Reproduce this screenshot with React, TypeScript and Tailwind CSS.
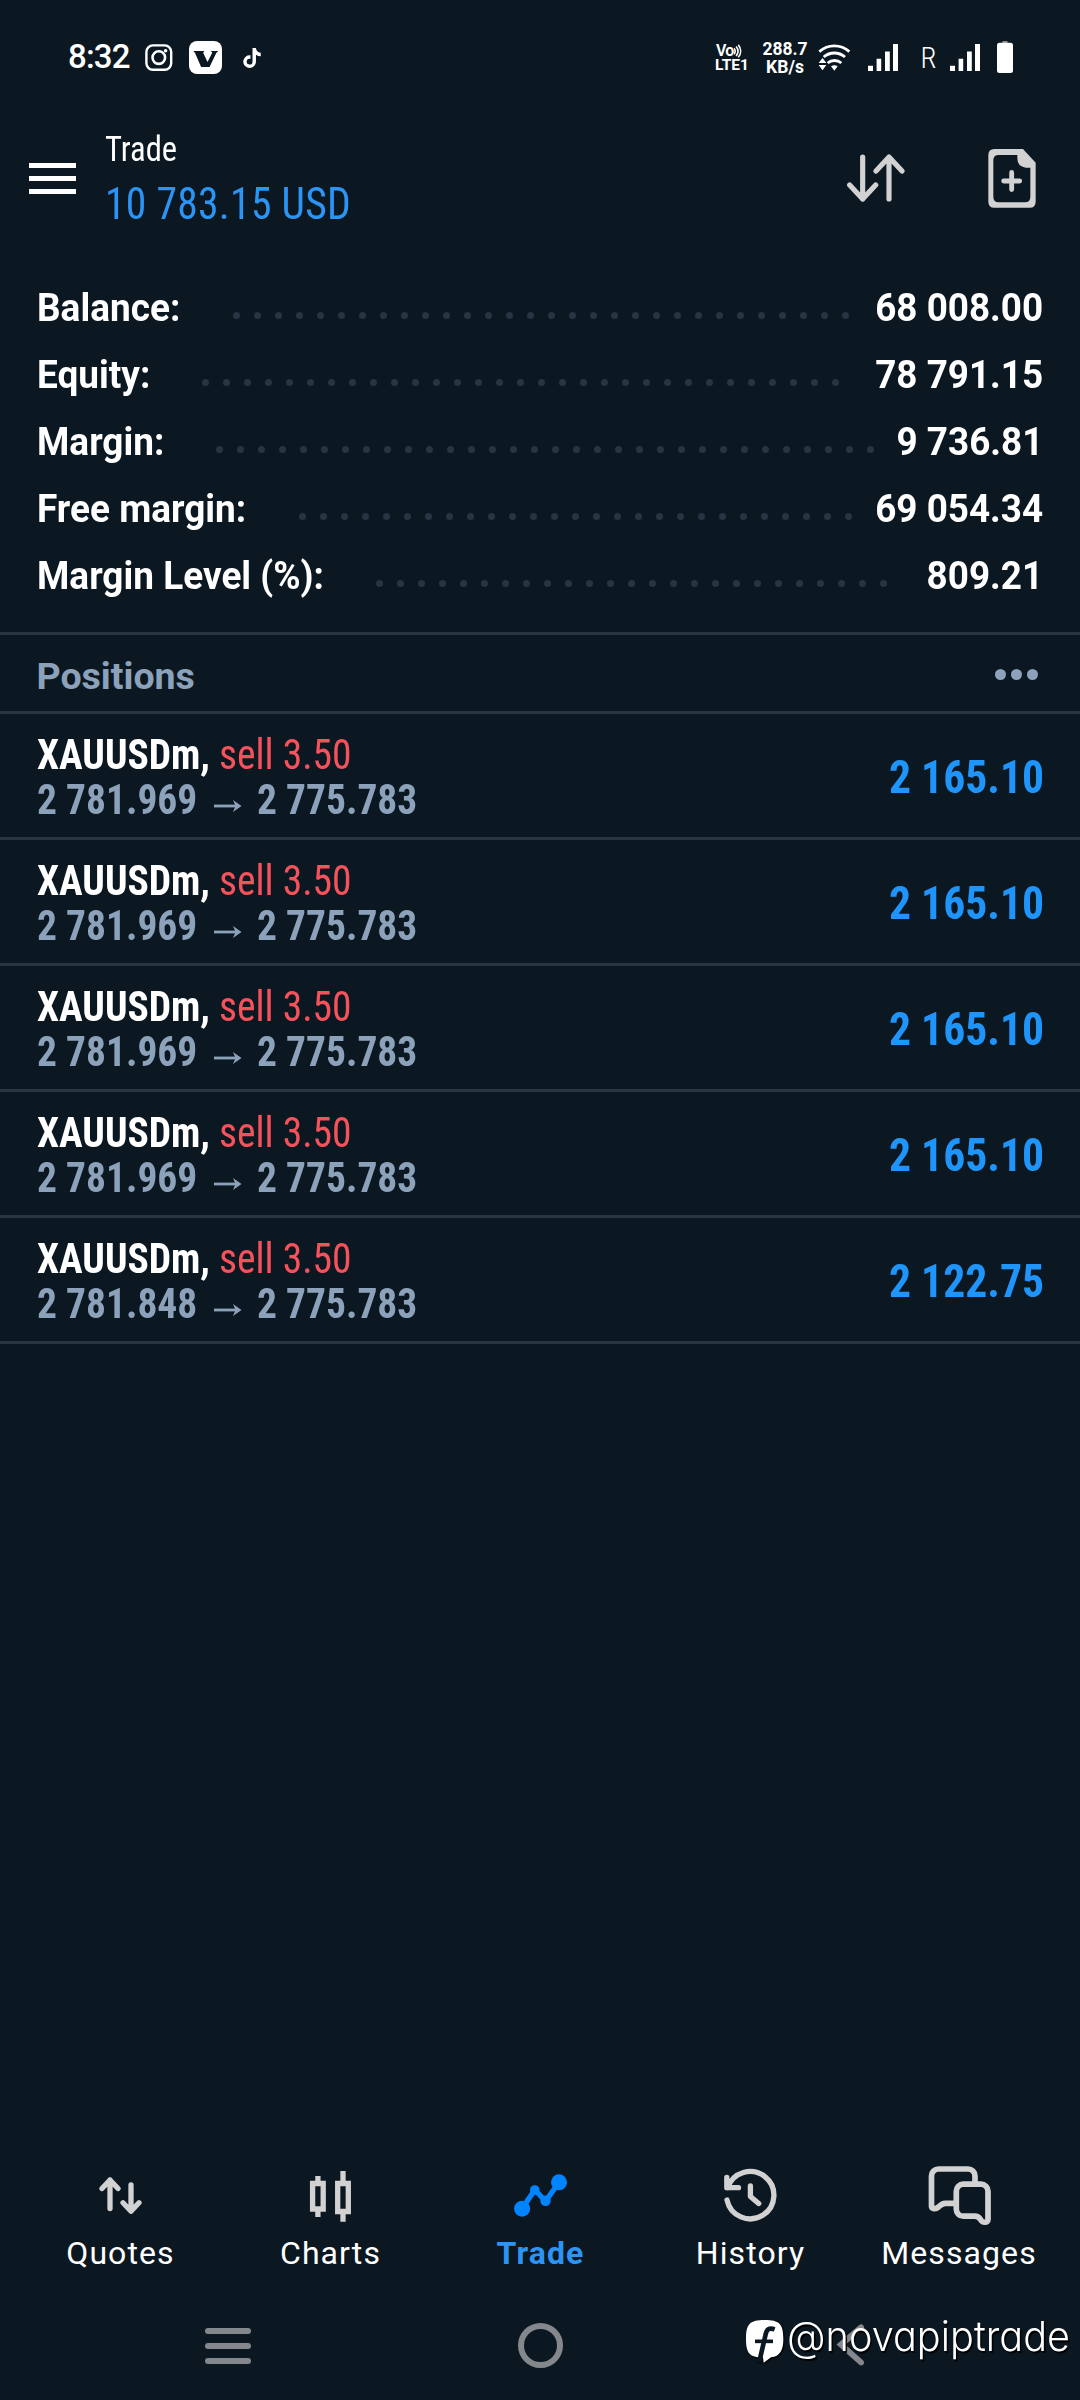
import type { ReactNode } from 'react';
import { FaTiktok } from 'react-icons/fa6';

const summary = [
  { label: 'Balance:', value: '68 008.00', dots: 30, end: 'mr-[21.200px]' },
  { label: 'Equity:', value: '78 791.15', dots: 31, end: 'mr-[31.500px]' },
  { label: 'Margin:', value: '9 736.81', dots: 32, end: 'mr-[18.200px]' },
  { label: 'Free margin:', value: '69 054.34', dots: 27, end: 'mr-[18.100px]' },
  { label: 'Margin Level (%):', value: '809.21', dots: 25, end: 'mr-[36.300px]' },
];

const positions = [
  { open: '2 781.969', profit: '2 165.10' },
  { open: '2 781.969', profit: '2 165.10' },
  { open: '2 781.969', profit: '2 165.10' },
  { open: '2 781.969', profit: '2 165.10' },
  { open: '2 781.848', profit: '2 122.75' },
];

function Signal() {
  return (
    <svg className="h-[27px] w-[30px]" viewBox="0 0 30 27" fill="#fff">
      <path d="M0 21.7h5V27H0zM8.6 14.7h4.6V27H8.6zM17 7.5h4.8V27H17zM25 0h5v27h-5z" />
    </svg>
  );
}

function StatusBar() {
  return (
    <div className="flex h-[114px] items-start text-white">
      <span className="ml-[68px] mt-[41px] w-[77px] text-[33px] leading-[32px] font-medium tracking-[-0.8px]">8:32</span>
      <svg className="mt-[44px] h-[28px] w-[28px]" viewBox="0 0 28 28" fill="none" stroke="#fff">
        <rect x="1.4" y="1.4" width="24.8" height="24.4" rx="6.5" strokeWidth="2.4" />
        <circle cx="13.8" cy="13.6" r="6.3" strokeWidth="2.6" />
        <circle cx="20.6" cy="6.7" r="1.8" fill="#fff" stroke="none" />
      </svg>
      <svg className="ml-[16px] mt-[41px] h-[33px] w-[33px]" viewBox="567 63 98 98">
        <rect x="567" y="63" width="98" height="98" rx="24" fill="#fff" />
        <path d="M580 93h33l-4 5 13 27 14-27-4-5h22l-6 6-20 41h-25l-18-41z" fill="#0c1821" />
      </svg>
      <FaTiktok className="ml-[21px] mt-[48px] h-[20px] w-[18px]" />
      <div className="ml-[455px] mt-[43px] h-[30px] w-[36px]">
        <div className="flex h-[15px] items-center">
          <span className="text-[16px] leading-[15px] font-semibold tracking-[-0.8px]">Vo</span>
          <svg className="h-[14px] w-[8px]" viewBox="0 0 9 15" fill="none" stroke="#fff" strokeWidth="1.8">
            <path d="M0 4.5c1.6 2 1.6 4.6 0 6.6M2.4 2.4c2.6 3.2 2.6 7.4 0 10.6M4.8.6c3.6 4.2 3.6 9.8 0 14" />
          </svg>
        </div>
        <div className="-ml-px text-[15.5px] leading-[14px] font-bold">LTE1</div>
      </div>
      <div className="ml-[8px] mt-[40px] w-[50px] text-center text-[17.5px] leading-[18px] font-bold">
        288.7
        <br />
        KB/s
      </div>
      <svg className="ml-[8px] mt-[43px] h-[28px] w-[34px]" viewBox="386 68 102 84">
        <g fill="none" stroke="#fff" strokeWidth="8.5">
          <path d="M390 94c26-23 64-23 90 0" />
          <path d="M403 110c19-16 45-16 64 0" />
          <path d="M415 128c12-10 29-10 41 0" />
        </g>
        <path d="M425 138q10-7 20 0l-10 13zM388 128l11.500-15 11.500 15zM388 134l11.500 16 11.500-16z" fill="#fff" />
      </svg>
      <div className="ml-[16px] mt-[43.500px]">
        <Signal />
      </div>
      <span className="ml-[22.500px] mt-[42px] w-[32px] text-[29px] leading-[32px] font-[350] font-stretch-[85%]">R</span>
      <div className="-ml-[3px] mt-[43.500px]">
        <Signal />
      </div>
      <svg className="ml-[17px] mt-[41px] h-[32px] w-[16px]" viewBox="0 0 16 32">
        <rect x="5.500" y="0" width="5" height="3" fill="#8a8f94" />
        <rect x="0" y="1.800" width="16" height="30.200" rx="2.500" fill="#fff" />
      </svg>
    </div>
  );
}

function Header() {
  return (
    <header className="flex h-[160px] items-start">
      <div className="ml-[29px] mt-[48.500px] flex w-[47px] flex-col gap-[8px]">
        <div className="h-[5.300px] bg-white" />
        <div className="h-[5.300px] bg-white" />
        <div className="h-[5.300px] bg-white" />
      </div>
      <div className="ml-[29px] mt-[10px] flex-1 origin-left scale-x-[0.945] font-stretch-[75%]">
        <div className="text-[34.5px] leading-[50px] text-white">Trade</div>
        <div className="text-[44px] leading-[60px] tracking-[0.300px] text-[#2b94f4]">10 783.15 USD</div>
      </div>
      <svg
        className="mt-[40px] h-[48px] w-[58px] shrink-0"
        viewBox="470 403 174 144"
        fill="none"
        stroke="#d2d2d3"
        strokeWidth="15.500"
        strokeLinecap="round"
        strokeLinejoin="round"
      >
        <path d="M517 412v126M478 496l39 42 39-42M596 538V412M557 454l39-42 39 42" />
      </svg>
      <svg className="ml-[83px] mr-[44px] mt-[35px] h-[59px] w-[48px] shrink-0" viewBox="893 387 144 177">
        <path
          d="M912 387h86l38 41v117q0 18-18 18H912q-18 0-18-18V405q0-18 18-18zM925 405q-16 0-16 16v110q0 16 16 16h79q16 0 16-16v-88h-14q-25-3-25-28v-10z"
          fill="#d2d2d3"
          fillRule="evenodd"
        />
        <path d="M964 457.500v51M940 483h48" stroke="#d2d2d3" strokeWidth="14.500" strokeLinecap="round" />
      </svg>
    </header>
  );
}

function Summary() {
  return (
    <section className="h-[361px] border-b-[3px] border-[#2a3542] pl-[36.500px] pr-[36.500px] text-white">
      {summary.map((row) => (
        <div key={row.label} className="flex h-[67px] items-center text-[38px] leading-[68px] font-bold">
          <span className="origin-left scale-x-[0.973]">{row.label}</span>
          <div className={`ml-auto flex translate-y-[8px] gap-[14px] ${row.end}`}>
            {Array.from({ length: row.dots }, (_, i) => (
              <i key={i} className="h-[7px] w-[7px] rounded-full bg-[#273442]" />
            ))}
          </div>
          <span className="shrink-0 origin-right scale-x-[0.970]">{row.value}</span>
        </div>
      ))}
    </section>
  );
}

function Positions() {
  return (
    <section>
      <div className="flex h-[79px] items-center justify-between border-b-[3px] border-[#2a3542] pl-[36.500px] pr-[42px] text-[#8ca2ba]">
        <h2 className="mt-[6px] text-[37.5px] leading-[40px] font-bold">Positions</h2>
        <div className="mt-[2px] flex gap-[5px]">
          <i className="h-[11px] w-[11px] rounded-full bg-[#8ca2ba]" />
          <i className="h-[11px] w-[11px] rounded-full bg-[#8ca2ba]" />
          <i className="h-[11px] w-[11px] rounded-full bg-[#8ca2ba]" />
        </div>
      </div>
      {positions.map((p, i) => (
        <div
          key={i}
          className="flex h-[126px] items-center justify-between border-b-[3px] border-[#2a3542] pl-[37px] pr-[36px] font-stretch-[75%]"
        >
          <div className="mt-[2px] text-[42px] leading-[45px]">
            <div className="origin-left scale-x-[0.940]">
              <span className="font-bold text-white">XAUUSDm,</span> <span className="text-[#f5525c]">sell 3.50</span>
            </div>
            <div className="flex font-bold text-[#8ca2ba]">
              <span className="w-[177px] origin-left scale-x-[0.940]">{p.open}</span>
              <svg className="mt-[23px] h-[12px] w-[28px]" viewBox="0 0 28 12" fill="none" stroke="#8ca2ba" strokeWidth="2.800">
                <path d="M0 6h24" />
                <path d="M19 0l8.500 6-8.500 6 2.500-6z" fill="#8ca2ba" stroke="none" />
              </svg>
              <span className="ml-[15px] origin-left scale-x-[0.940]">2 775.783</span>
            </div>
          </div>
          <span className="mt-[2px] origin-right scale-x-[0.928] text-[47px] leading-[60px] font-bold text-[#1f95fb]">{p.profit}</span>
        </div>
      ))}
    </section>
  );
}

function Tab({ label, box, active, children }: { label: string; box: string; active?: boolean; children: ReactNode }) {
  return (
    <div className="flex w-[210px] flex-col items-center">
      <svg
        className="h-[70px] w-[80px]"
        viewBox={box}
        fill="none"
        stroke="#d2d2d3"
        strokeWidth="5.300"
        strokeLinecap="round"
        strokeLinejoin="round"
      >
        {children}
      </svg>
      <span
        className={`mt-[7px] text-[32px] leading-[32px] tracking-[1.100px] ${label === 'Messages' ? 'mr-[2px]' : 'ml-[1px]'} ${active ? 'font-bold text-[#2b94f4]' : 'text-white'}`}
      >
        {label}
      </span>
    </div>
  );
}

function TabBar() {
  return (
    <nav className="flex h-[140px] px-[15px]">
      <Tab label="Quotes" box="80 20 80 70">
        <path d="M110 40v28.500M102 48.500l8-8.500 8 8.500M131 45v26M123 62.800l8 8.500 8-8.500" />
      </Tab>
      <Tab label="Charts" box="290 20 80 70">
        <g strokeLinecap="butt" strokeLinejoin="miter">
          <path d="M312.600 43.500h10.600v25.500h-10.600zM317.900 36v6M317.900 70.500V77" />
          <path d="M337.700 43.500h10.600v28h-10.600zM343 31v11M343 72v9.700" />
        </g>
      </Tab>
      <Tab label="Trade" box="500 20 80 70" active>
        <g stroke="#0084ff" fill="#0084ff">
          <path d="M522 68.700l12.800-19 10.700 11.500L559 42.300" fill="none" />
          <circle cx="522.100" cy="68.700" r="8" stroke="none" />
          <circle cx="534.800" cy="50" r="4.800" stroke="none" />
          <circle cx="545.500" cy="60.800" r="5.200" stroke="none" />
          <circle cx="559" cy="42.300" r="8" stroke="none" />
        </g>
      </Tab>
      <Tab label="History" box="710 20 80 70">
        <path d="M727 60a23.700 23.700 0 1 0 .7-12.300M726.800 37.500v10.200h11.700M750.400 46v10.500l8.300 7" />
      </Tab>
      <Tab label="Messages" box="920 20 80 70">
        <g strokeWidth="5.700">
          <path d="M975 43V36a7 7 0 0 0-7-7h-29.500a7 7 0 0 0-7 7v30c0 3 4 3.500 7 1 2-2.300 4-3.700 7-3.700h8" />
          <path d="M963.300 44.200H981a7 7 0 0 1 7 7V79.500c0 3.500-5.500 3.800-7.500 0-1.500-2.800-3-3.300-6-3.300h-11.200a7 7 0 0 1-7-7V51.200a7 7 0 0 1 7-7Z" />
        </g>
      </Tab>
    </nav>
  );
}

function SystemNav() {
  return (
    <div className="relative flex h-[100px] items-start">
      <div className="ml-[204.500px] mt-[28.300px] flex w-[46.500px] flex-col gap-[8.700px]">
        <div className="h-[6px] rounded-full bg-[#84888c]" />
        <div className="h-[6px] rounded-full bg-[#84888c]" />
        <div className="h-[6px] rounded-full bg-[#84888c]" />
      </div>
      <div className="ml-[266.500px] mt-[22.500px] h-[45px] w-[45px] rounded-full border-[6px] border-[#84888c]" />
      <svg className="ml-[273.500px] mt-[24px] h-[42px] w-[29px]" viewBox="0 0 29 42" fill="#84888c">
        <path d="M.5 20.500L23 1.200q2.500-2 4.300.2t-.6 4.400L9.500 20.700 26.700 36q2.500 2.300.6 4.400t-4.300.2z" />
      </svg>
      <div className="absolute left-[746px] top-0 flex items-start">
        <svg className="mt-[20px] h-[44px] w-[38px] drop-shadow-[1.500px_1.500px_1px_#000]" viewBox="48 60 114 132">
          <path d="M104 60c44 0 56 12 56 56 0 36-10 52-37 56l-22 16-2-16c-40 0-51-12-51-56 0-44 12-56 56-56Z" fill="#fff" />
          <path d="M134 88c-17-6-24 0-27 15L91 172l-3 14" fill="none" stroke="#0c1821" strokeWidth="14" />
          <path d="M75 124h54" stroke="#0c1821" strokeWidth="11" />
        </svg>
        <span className="ml-[2.500px] mt-[11px] origin-left scale-x-[0.968] font-[Inter] text-[41px] leading-[50px] font-[350] text-white text-shadow-[1.500px_1.500px_1px_#000] [font-feature-settings:'cv11']">
          @novapiptrade
        </span>
      </div>
    </div>
  );
}

export default function App() {
  return (
    <div className="flex h-[2400px] w-[1080px] flex-col overflow-hidden bg-[#0c1821] font-[Roboto,sans-serif] whitespace-nowrap">
      <StatusBar />
      <Header />
      <Summary />
      <Positions />
      <div className="flex-1" />
      <TabBar />
      <SystemNav />
    </div>
  );
}
